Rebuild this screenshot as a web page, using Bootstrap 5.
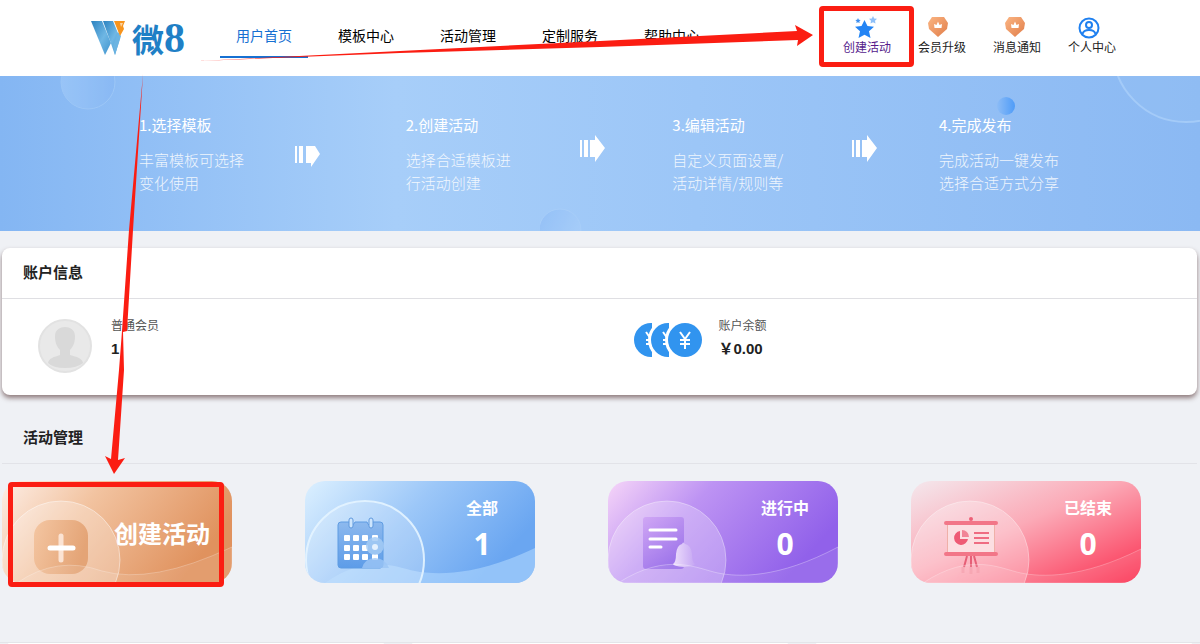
<!DOCTYPE html>
<html lang="zh-CN">
<head>
<meta charset="utf-8">
<meta name="viewport" content="width=device-width, initial-scale=1">
<title>微8 用户首页</title>
<link rel="stylesheet" href="https://cdn.jsdelivr.net/npm/bootstrap@5.3.0/dist/css/bootstrap.min.css">
<style>
  body { font-family: "Noto Sans CJK SC", "Liberation Sans", sans-serif; background: #eff1f5; color: #222; font-size: 14px; }
  a { text-decoration: none; }

  .top-bar { height: 76px; padding-left: 90px; padding-right: 84px; background: #fff; }
  .brand { width: 130px; color: #1f80c6; font-weight: 700; font-size: 32px; line-height: 36px; }
  .brand-num { font-family: "Liberation Serif", serif; font-weight: 700; font-size: 42px; }
  .main-nav { gap: 14px; }
  .main-nav .nav-link { padding: 24px 16px 10px; line-height: 22px; color: #000; border-bottom: 2px solid transparent; }
  .main-nav .nav-link.active { color: #1670d2; border-color: #1670d2; }
  .quick { gap: 27px; font-size: 12px; line-height: 16px; }
  .quick a { color: #222; }
  .quick .visited-link { color: #551a8b; }

  .marker { position: absolute; border: 5px solid #fb1d12; border-radius: 4px; pointer-events: none; }
  .marker-nav { inset: -10px -23px -12px -24px; }
  .marker-tile { inset: 1px 8px -4px 6px; }
  .arrows { position: absolute; top: 0; left: 0; pointer-events: none; z-index: 5; }

  .banner { height: 155px; padding: 37px 0 0 139px; overflow: hidden; color: #fff;
    background: linear-gradient(90deg, #84b6f3 0%, #a7cef9 33%, #9cc6f7 58%, #8bb9f3 100%); }
  .banner-art { position: absolute; top: 0; height: 155px; }
  .art-l { left: 0; } .art-m { left: 45%; } .art-r { right: 0; }
  .steps { display: grid; grid-template-columns: repeat(3, 1fr) 261px; }
  .step { display: grid; grid-template-columns: 1fr 92px; font-size: 15px; line-height: 23px; }
  .step:first-child { grid-template-columns: 1fr 111px; }
  .step h2 { font-size: 15px; line-height: 23px; margin: 0 0 12px; font-weight: 400; }
  .step p { margin: 0; font-weight: 300; opacity: .85; white-space: nowrap; }
  .step svg { margin-top: 20px; }
  .step:first-child svg { margin-top: 26px; }

  .account { margin: 17px 3px 0 2px; border: 0; border-radius: 8px; box-shadow: 0 3px 5px rgba(90, 60, 60, .65); }
  .head-line { font-size: 15px; font-weight: 700; line-height: 24px; padding: 12px 21px 14px; margin: 0; border-bottom: 1px solid #dfdfe3; }
  .account-body { padding: 16px 36px 0; height: 96px; }
  .who { gap: 19px; } .money { gap: 17px; }
  .cap { font-size: 12px; line-height: 20px; color: #555; }
  .val { font-family: "Liberation Sans", "Noto Sans CJK SC", sans-serif; font-weight: 700; font-size: 15px; line-height: 28px; }

  .manage .head-line { margin: 18px 3px 0 2px; border-color: #e2e3e8; }
  .manage { padding-top: 12px; margin-top: -12px; }
  .tiles { display: grid; grid-template-columns: repeat(4, 1fr); gap: 73px; padding: 17px 59px 0 2px; }
  .tile { height: 102px; color: #fff; font-weight: 700; }
  .tile:hover { color: #fff; }
  .tile-art { position: absolute; inset: 0; width: 100%; height: 100%; border-radius: 20px; }
  .tile-text { position: relative; width: 106px; padding-top: 15px; font-size: 16px; line-height: 22px; text-align: center; }
  .tile-num { font-family: "Open Sans", sans-serif; font-size: 30px; line-height: 52px; }
  .tile-main { position: relative; font-size: 24px; line-height: 36px; padding: 34px 22px 0 0; }
  .panels { display: grid; grid-template-columns: repeat(3, 1fr); gap: 28px; margin-top: 59px; padding: 0 8px; border-top: 1px solid #e4e5e9; }
  .panel { background: #fff; border-radius: 8px 8px 0 0; }
</style>
</head>
<body>
<div class="min-vh-100 d-flex flex-column position-relative">
  <header class="top-bar d-flex">
    <a class="brand d-flex align-items-center flex-shrink-0" href="#" aria-label="微8">
      <svg class="flex-shrink-0" width="38" height="36" viewBox="0 0 38 36" aria-hidden="true">
        <defs><linearGradient id="w" x1="0" y1="0" x2="1" y2="1"><stop offset="0" stop-color="#2b82c0"/><stop offset=".55" stop-color="#6fb7e4"/><stop offset="1" stop-color="#3d92cd"/></linearGradient></defs>
        <path d="M1 1h11l9 22-6 12z" fill="url(#w)"/><path d="M13 1h10l7 17-5 17z" fill="url(#w)"/>
        <path d="M25 35l6-19-3-4-5 14z" fill="#6bb4e2"/>
        <path d="M24 1h11l-2 5 1 3-4 7z" fill="#f7941d"/><path d="M30 3h3l-2 4z" fill="#fff" opacity=".6"/>
      </svg>
      <span class="ms-1">微</span><span class="brand-num">8</span>
    </a>
    <nav class="nav main-nav align-items-start flex-nowrap text-nowrap">
      <a class="nav-link active" href="#">用户首页</a>
      <a class="nav-link" href="#">模板中心</a>
      <a class="nav-link" href="#">活动管理</a>
      <a class="nav-link" href="#">定制服务</a>
      <a class="nav-link" href="#">帮助中心</a>
    </nav>
    <div class="quick d-flex ms-auto pt-3 text-nowrap text-center align-items-start">
      <a class="visited-link position-relative" href="#">
        <svg class="d-block mx-auto" width="26" height="23" viewBox="0 0 26 23" aria-hidden="true">
          <path d="M10.500 4l3 6 6.500.8-5 4.500 1.500 6.700-6-3.300-6 3.300L6 15.300l-5-4.500 6.500-.8z" fill="#2384f4"/>
          <path d="M4 2l.8 1.700 1.900.2-1.400 1.300.4 1.900L4 6.200l-1.700.9.4-1.900-1.400-1.300 1.900-.2z" fill="#3d8ff0"/>
          <path d="M19 0l1.200 2.500 2.800.3-2 1.900.5 2.800L19 6.200l-2.500 1.300.5-2.800-2-1.900 2.800-.3z" fill="#8fc0f8"/>
        </svg>创建活动
        <span class="marker marker-nav"></span>
      </a>
      <a href="#">
        <svg class="d-block ms-2" width="28" height="23" viewBox="0 0 28 23" aria-hidden="true">
          <defs><linearGradient id="g" x1="0" y1="0" x2="1" y2="1"><stop offset="0" stop-color="#fbb583"/><stop offset="1" stop-color="#e07d49"/></linearGradient></defs>
          <path d="M6 1h12l4 6-1 6-9 8-9-8-1-6z" fill="url(#g)"/><path d="M8.500 12l-.5-4 2.500 1 1.500-3.500L13.500 9 16 8l-.5 4z" fill="#fff"/>
        </svg>会员升级
      </a>
      <a href="#">
        <svg class="d-block ms-2" width="28" height="23" viewBox="-2 0 28 23" aria-hidden="true">
          <path d="M6 1h12l4 6-1 6-9 8-9-8-1-6z" fill="url(#g)"/><path d="M8.500 12l-.5-4 2.500 1 1.500-3.500L13.500 9 16 8l-.5 4z" fill="#fff"/>
        </svg>消息通知
      </a>
      <a href="#">
        <svg class="d-block ms-2" width="26" height="23" viewBox="0 0 26 23" fill="none" stroke="#1f80f0" stroke-width="2" aria-hidden="true">
          <circle cx="13" cy="12" r="9.500"/><circle cx="13" cy="9" r="3"/><path d="M6.500 18q1-4 6.500-4t6.500 4"/>
        </svg>个人中心
      </a>
    </div>
  </header>

  <section class="banner position-relative">
    <svg class="banner-art art-l" width="130" viewBox="0 0 130 155" aria-hidden="true"><defs><linearGradient id="b1"><stop offset="0" stop-color="#9fc9f9"/><stop offset="1" stop-color="#88b8f4"/></linearGradient></defs><circle cx="88" cy="6" r="27" fill="url(#b1)" stroke="#a4ccf8" opacity=".7"/></svg>
    <svg class="banner-art art-m" width="50" viewBox="0 0 50 155" aria-hidden="true"><defs><linearGradient id="b3" x2="1" y2=".5"><stop offset="0" stop-color="#8fbdf6"/><stop offset="1" stop-color="#a8cefa"/></linearGradient></defs><circle cx="20" cy="154" r="21" fill="url(#b3)" stroke="#abd0fa" opacity=".7"/></svg>
    <svg class="banner-art art-r" width="210" viewBox="0 0 210 155" aria-hidden="true"><defs><linearGradient id="b2"><stop offset="0" stop-color="#8cbcf6"/><stop offset="1" stop-color="#4f9cf8"/></linearGradient></defs><circle cx="16" cy="30" r="9" fill="url(#b2)"/><circle cx="196" cy="-27" r="73" fill="#93bff4" stroke="#a4cbf8" stroke-width="2" fill-opacity=".5"/></svg>
    <div class="steps position-relative">
      <div class="step"><div><h2>1.选择模板</h2><p>丰富模板可选择<br>变化使用</p></div>
        <svg width="28" height="30" fill="#fff" aria-hidden="true"><path d="M0 7h2v17H0zM4 7h4v17H4zM11 7h9l5 8-9 13v-4h-5z"/></svg></div>
      <div class="step"><div><h2>2.创建活动</h2><p>选择合适模板进<br>行活动创建</p></div>
        <svg width="28" height="30" fill="#fff" aria-hidden="true"><path d="M0 7h2v17H0zM4 7h4v17H4zM10 7h5V2l10 13-10 14v-5h-5z"/></svg></div>
      <div class="step"><div><h2>3.编辑活动</h2><p>自定义页面设置/<br>活动详情/规则等</p></div>
        <svg width="30" height="30" fill="#fff" aria-hidden="true"><path d="M5 7h2v17H5zM9 7h4v17H9zM15 7h5V2l10 13-10 14v-5h-5z"/></svg></div>
      <div class="step"><div><h2>4.完成发布</h2><p>完成活动一键发布<br>选择合适方式分享</p></div></div>
    </div>
  </section>

  <section class="card account">
    <h2 class="head-line">账户信息</h2>
    <div class="account-body row g-0">
      <div class="col-6 d-flex who">
        <svg class="mt-1" width="54" height="54" viewBox="0 0 54 54" aria-hidden="true"><circle cx="27" cy="27" r="26" fill="#e9e9e9" stroke="#e2e2e2" stroke-width="2"/><path d="M17 17c0-12 20-12 20 0 0 7-2 11-5 14v5c7 2 12 3 13 8q-6 5-18 5T10 44c1-5 6-6 12-8v-5c-3-3-5-7-5-14z" fill="#d9d9d9"/></svg>
        <div><div class="cap">普通会员</div><div class="val">1</div></div>
      </div>
      <div class="col-6 d-flex money ps-4 pe-0">
        <svg class="mt-2 ms-2" width="70" height="36" viewBox="-1 1 70 36" aria-hidden="true">
          <defs><g id="coin"><circle cx="18" cy="18" r="20" fill="#fff"/><circle cx="18" cy="18" r="17" fill="#3194ef"/><path d="M13 10l5 7 5-7M18 17v10M13 18h10M13 22h10" fill="none" stroke="#fff" stroke-width="2"/></g>
          <clipPath id="half"><path d="M-3-3h22v44H-3z"/></clipPath></defs>
          <use href="#coin" clip-path="url(#half)"/><g transform="translate(17 0)"><use href="#coin" clip-path="url(#half)"/></g><use href="#coin" x="34"/></svg>
        <div><div class="cap">账户余额</div><div class="val">￥0.00</div></div>
      </div>
    </div>
  </section>

  <section class="manage">
    <h2 class="head-line">活动管理</h2>
    <div class="tiles">
      <a class="tile position-relative d-flex justify-content-end" href="#">
        <svg class="tile-art" viewBox="0 0 230 102" preserveAspectRatio="none" aria-hidden="true">
          <defs><linearGradient id="t1" x2="1" y2=".35"><stop offset="0" stop-color="#fdeee6"/><stop offset=".4" stop-color="#f2c3a0"/><stop offset="1" stop-color="#e0925e"/></linearGradient>
          <linearGradient id="p1" x2="1" y2=".3"><stop offset="0" stop-color="#f4c6a2"/><stop offset="1" stop-color="#e4a476"/></linearGradient></defs>
          <path fill="url(#t1)" d="M0 0h230v102H0z"/>
          <circle cx="59" cy="79" r="59" fill="#fff" fill-opacity=".25" stroke="#fff" stroke-opacity=".45"/>
          <rect x="32" y="39" width="54" height="54" rx="16" fill="url(#p1)"/>
          <path d="M59 55v24" stroke="#fbe3d3" stroke-width="5" stroke-linecap="round"/><path d="M48 67h23" stroke="#fff" stroke-width="5" stroke-linecap="round"/>
          <path d="M15 102Q55 74 100 90 150 104 230 66V102z" fill="#fff" fill-opacity=".1" stroke="#fff" stroke-opacity=".25"/>
        </svg>
        <span class="tile-main">创建活动</span><span class="marker marker-tile"></span>
      </a>
      <a class="tile position-relative d-flex justify-content-end" href="#">
        <svg class="tile-art" viewBox="0 0 230 102" preserveAspectRatio="none" aria-hidden="true">
          <defs><linearGradient id="t2" x2="1" y2=".4"><stop offset="0" stop-color="#dcf0ff"/><stop offset=".5" stop-color="#9cc7f8"/><stop offset="1" stop-color="#6aa6f1"/></linearGradient>
          <linearGradient id="p2" x2="0" y2="1"><stop offset="0" stop-color="#8db9ee"/><stop offset="1" stop-color="#5d9ce8"/></linearGradient></defs>
          <path fill="url(#t2)" d="M0 0h230v102H0z"/>
          <path d="M20 102C62 72 90 86 110 90S170 96 230 67V102z" fill="#b5dbff" fill-opacity=".55"/>
          <circle cx="60" cy="79" r="59" fill="#fff" fill-opacity=".18" stroke="#e4f4ff" stroke-opacity=".9" stroke-width="2"/>
          <path d="M36 41h9q2 6 5 0h12q2 6 5 0h8q3 0 3 3v40q0 3-3 3H36q-3 0-3-3V44q0-3 3-3z" fill="url(#p2)" stroke="#5f9ce2"/>
          <g fill="#cde5fd" stroke="#5f98dd"><rect x="44" y="37" width="4" height="10" rx="2"/><rect x="64" y="37" width="4" height="10" rx="2"/></g>
          <g fill="#fff"><rect x="39" y="54" width="6" height="6" rx="1"/><rect x="48" y="54" width="6" height="6" rx="1"/><rect x="57" y="54" width="6" height="6" rx="1"/><rect x="67" y="54" width="6" height="6" rx="1"/><rect x="39" y="64" width="6" height="6" rx="1"/><rect x="48" y="64" width="6" height="6" rx="1"/><rect x="57" y="64" width="6" height="6" rx="1"/><rect x="39" y="73" width="6" height="6" rx="1"/><rect x="48" y="73" width="6" height="6" rx="1"/><rect x="57" y="73" width="6" height="6" rx="1"/><rect x="67" y="73" width="6" height="6" rx="1"/></g>
          <circle cx="70" cy="65" r="9" fill="#a5cbf5" fill-opacity=".85"/><circle cx="70" cy="66" r="3" fill="#e4f1fe"/><path d="M57 87q3-10 13-10t14 10z" fill="#9cc6f5" fill-opacity=".8"/>
        </svg>
        <span class="tile-text"><span class="d-block">全部</span><span class="d-block tile-num">1</span></span>
      </a>
      <a class="tile position-relative d-flex justify-content-end" href="#">
        <svg class="tile-art" viewBox="0 0 230 102" preserveAspectRatio="none" aria-hidden="true">
          <defs><linearGradient id="t3" x2="1" y2=".4"><stop offset="0" stop-color="#f6d5f8"/><stop offset=".4" stop-color="#bd93f3"/><stop offset="1" stop-color="#9161ea"/></linearGradient>
          <linearGradient id="p3" x2=".6" y2="1"><stop offset="0" stop-color="#d0a7f5"/><stop offset="1" stop-color="#9d74ea"/></linearGradient>
          <linearGradient id="p3b"><stop offset="0" stop-color="#eedffc"/><stop offset="1" stop-color="#c5a6f3"/></linearGradient></defs>
          <path fill="url(#t3)" d="M0 0h230v102H0z"/>
          <circle cx="59" cy="79" r="59" fill="#fff" fill-opacity=".25" stroke="#fff" stroke-opacity=".35"/>
          <rect x="35" y="36" width="41" height="52" rx="3" fill="url(#p3)"/>
          <path d="M42 49h26M42 58h26M42 66h11" stroke="#fff" stroke-width="3" stroke-linecap="round"/>
          <path d="M65 83q3-2 3-10 1-9 6-10 1-3 3 0 6 1 7 10 0 8 3 10 0 2-11 3-11-1-11-3z" fill="url(#p3b)"/>
          <path d="M10 102C60 70 90 88 110 92S170 98 230 66V102z" fill="#fff" fill-opacity=".08" stroke="#fff" stroke-opacity=".3"/>
        </svg>
        <span class="tile-text"><span class="d-block">进行中</span><span class="d-block tile-num">0</span></span>
      </a>
      <a class="tile position-relative d-flex justify-content-end" href="#">
        <svg class="tile-art" viewBox="0 0 230 102" preserveAspectRatio="none" aria-hidden="true">
          <defs><linearGradient id="t4" x2="1" y2="1"><stop offset="0" stop-color="#f4e8ed"/><stop offset=".45" stop-color="#fbaab7"/><stop offset="1" stop-color="#fb2f50"/></linearGradient></defs>
          <path fill="url(#t4)" d="M0 0h230v102H0z"/>
          <circle cx="59" cy="79" r="59" fill="#fff" fill-opacity=".27" stroke="#fff" stroke-opacity=".35"/>
          <rect x="36" y="42" width="48" height="30" fill="#fcdfe2"/><path d="M36.500 42v30M83.500 42v30" stroke="#efb0a8"/>
          <path d="M35 42h50M35 73h50" stroke="#f27688" stroke-width="4" stroke-linecap="round"/><circle cx="60" cy="38" r="2" fill="#ed6077"/>
          <path d="M49 50a7 7 0 1 0 8 8h-8z" fill="#ee5b75"/><path d="M51 49a7 7 0 0 1 7 7h-7z" fill="#f18597"/>
          <path d="M63 52h15M63 57h15M63 62h15" stroke="#ef6c82" stroke-width="2"/>
          <path d="M56 75l-3 11M60 75v11M63 75l3 11" stroke="#e65f77" stroke-width="2"/><path d="M52 86v6M60 86v7M67 86v6" stroke="#ef8c9c" stroke-width="3" opacity=".45"/>
          <path d="M12 102C60 70 90 88 110 92S170 98 230 68V102z" fill="#fff" fill-opacity=".1" stroke="#fff" stroke-opacity=".25"/>
        </svg>
        <span class="tile-text"><span class="d-block">已结束</span><span class="d-block tile-num">0</span></span>
      </a>
    </div>
  </section>

  <div class="panels flex-grow-1"><div class="panel"></div><div class="panel"></div><div class="panel"></div></div>

  <svg class="arrows" width="830" height="480" fill="#fb1d12" aria-hidden="true">
    <path d="M198 61L400 51 600 41 797 31 795 25 813 35 797 46 798 40 600 47 400 53z"/>
    <path d="M143 74L129 230 122 331 119 370 111 459 105 456 114 474 125 458 118 460 124 370 123 332 127 331 133 230z"/>
  </svg>
</div>
<script src="https://cdn.jsdelivr.net/npm/bootstrap@5.3.0/dist/js/bootstrap.bundle.min.js"></script>
</body>
</html>
